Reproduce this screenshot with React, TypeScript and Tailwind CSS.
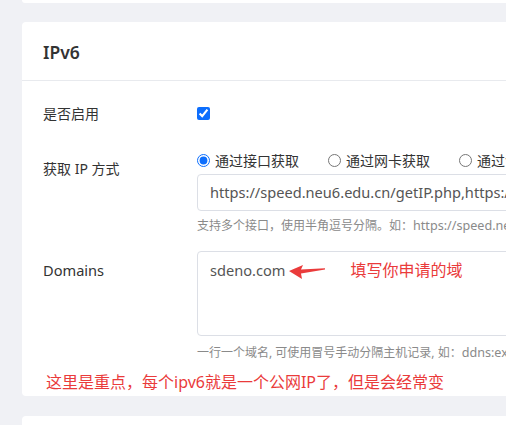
import React from "react";

const font = {
  fontFamily: '"Noto Sans", "Noto Sans CJK SC", sans-serif',
};

function Row({
  label,
  labelClass = "",
  children,
}: {
  label: string;
  labelClass?: string;
  children: React.ReactNode;
}) {
  return (
    <div className="flex">
      <div className={"w-[154px] shrink-0 leading-[22px] text-[#333]" + " " + labelClass}>
        {label}
      </div>
      <div className="flex-1">{children}</div>
    </div>
  );
}

function Radio({ label, checked }: { label: string; checked?: boolean }) {
  return (
    <label className="mr-[29px] flex items-center whitespace-nowrap">
      <input
        type="radio"
        name="ipv6-method"
        defaultChecked={checked}
        className="m-0 h-[13px] w-[13px] accent-[#0d6efd]"
      />
      <span className="ml-[5px]">{label}</span>
    </label>
  );
}

function Arrow() {
  return (
    <svg width="40" height="18" viewBox="0 0 40 18" className="shrink-0">
      <path
        d="M2 8 L16 2 L14 6.5 L38 5.3 L38 6.5 L14 10.5 L15 16 Z"
        fill="#ea3b3b"
      />
    </svg>
  );
}

export default function App() {
  return (
    <div
      className="h-[425px] w-[506px] overflow-hidden bg-[#f0f1f5]"
      style={font}
    >
      <div className="w-[760px] pl-[22px]">
        <div className="h-[3px] rounded-b-[4px] bg-white" />

        <div className="mt-[19px] rounded-[4px] bg-white">
          <div className="flex h-[59px] items-center border-b border-[#e8eaee] px-[21px] pt-[3px] text-[17.5px] font-semibold text-[#333]">
            IPv6
          </div>

          <div className="px-[21px] pb-[2px] pt-[14px]">
            <Row label="是否启用" labelClass="pt-[8px] text-[14px]">
              <div className="flex h-[36px] items-center">
                <input
                  type="checkbox"
                  defaultChecked
                  className="m-0 h-[13px] w-[13px] accent-[#0d6efd]"
                />
              </div>
            </Row>

            <div className="mt-[18px]">
              <Row label="获取 IP 方式" labelClass="pt-[9px] text-[14px]">
                <div className="flex h-[22px] items-center text-[14px] text-[#333]">
                  <Radio label="通过接口获取" checked />
                  <Radio label="通过网卡获取" />
                  <Radio label="通过命令获取" />
                </div>
                <div className="mt-[3px] flex h-[37px] w-[460px] items-center whitespace-nowrap rounded-[4px] border border-[#dcdfe6] px-[12px] text-[14.6px] text-[#555]">
                  https://speed.neu6.edu.cn/getIP.php,https://v6.ident.me
                </div>
                <div className="mt-[6px] whitespace-nowrap text-[12px] leading-[18px] text-[#8a8a8a]">
                  支持多个接口，使用半角逗号分隔。如：
                  <span className="text-[12.6px]">https://speed.neu6.edu.cn/getIP.php</span>
                </div>
              </Row>
            </div>

            <div className="mt-[16px]">
              <Row label="Domains" labelClass="pt-[8px] text-[14.6px]">
                <div className="h-[85px] w-[460px] rounded-[4px] border border-[#dcdfe6] px-[12px] pt-[7px]">
                  <div className="flex items-center leading-[22px] text-[#555]">
                    <span className="text-[14.6px]">sdeno.com</span>
                    <span className="ml-[2px] mt-[3px] flex">
                      <Arrow />
                    </span>
                    <span className="ml-[23px] text-[16px] text-[#ea3b3b]">
                      填写你申请的域
                    </span>
                  </div>
                </div>
                <div className="mt-[8px] whitespace-nowrap text-[12px] leading-[18px] text-[#8a8a8a]">
                  一行一个域名, 可使用冒号手动分隔主机记录, 如：
                  <span className="text-[12.6px]">ddns:example.com</span>
                </div>
              </Row>
            </div>

            <div className="mt-[8px] pl-[3px] text-[16px] leading-[24px] text-[#ea3b3b]">
              这里是重点，每个ipv6就是一个公网IP了，但是会经常变
            </div>
          </div>
        </div>

        <div className="mt-[20px] h-[20px] rounded-t-[4px] bg-white" />
      </div>
    </div>
  );
}
